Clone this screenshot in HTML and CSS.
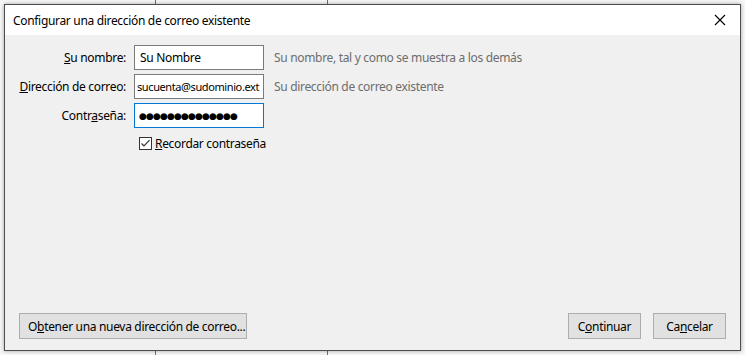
FILE: index.html
```html
<!DOCTYPE html>
<html lang="es">
<head>
<meta charset="utf-8">
<title>Configurar una dirección de correo existente</title>
<link rel="stylesheet" href="styles.css">
</head>
<body>
<div class="window">
  <div class="titlebar">
    <span class="title">Configurar una dirección de correo existente</span>
    <svg class="close" width="12" height="12" viewBox="0 0 12 12"><path d="M1 1 L11 11 M11 1 L1 11" stroke="#000" stroke-width="1.1" fill="none"/></svg>
  </div>
  <div class="content">
    <div class="form">
      <label class="label"><u>S</u>u nombre:</label>
      <div class="input">Su Nombre</div>
      <span class="hint">Su nombre, tal y como se muestra a los demás</span>

      <label class="label"><u>D</u>irección de correo:</label>
      <div class="input small">sucuenta@sudominio.ext</div>
      <span class="hint">Su dirección de correo existente</span>

      <label class="label">Contr<u>a</u>seña:</label>
      <div class="input focus dots">●●●●●●●●●●●●●●</div>
      <span class="hint"></span>

      <span></span>
      <div class="check">
        <svg class="box" width="13" height="13" viewBox="0 0 13 13"><rect x="0.5" y="0.5" width="12" height="12" fill="#fff" stroke="#333"/><path d="M2.5 6.5 L5 9 L10.5 3.2" stroke="#333" stroke-width="1.2" fill="none"/></svg>
        <span><u>R</u>ecordar contraseña</span>
      </div>
    </div>
    <div class="footer">
      <button class="btn wide">O<u>b</u>tener una nueva dirección de correo...</button>
      <div class="right">
        <button class="btn">C<u>o</u>ntinuar</button>
        <button class="btn">Ca<u>n</u>celar</button>
      </div>
    </div>
  </div>
</div>
</body>
</html>
```
FILE: styles.css
```css
html, body {
  margin: 0;
  padding: 0;
}
body {
  width: 745px;
  height: 355px;
  overflow: hidden;
  font-family: "Segoe UI", "Noto Sans", sans-serif;
  font-size: 12px;
  letter-spacing: -0.32px;
  color: #000;
  background:
    linear-gradient(#6e6e6e, #6e6e6e) 155px 0 / 1px 100% no-repeat,
    linear-gradient(#6e6e6e, #6e6e6e) 327px 0 / 1px 100% no-repeat,
    #f7f7f7;
  padding: 4px 0 0 4px;
  box-sizing: border-box;
}
.window {
  width: 737px;
  height: 347px;
  box-sizing: border-box;
  border: 1px solid #4d4d4d;
  background: #f0f0f0;
  display: flex;
  flex-direction: column;
  box-shadow: 0 0 4px rgba(0,0,0,0.35);
}
.titlebar {
  height: 30px;
  background: #fff;
  display: flex;
  align-items: center;
  justify-content: space-between;
  padding: 0 14px 0 8px;
  flex-shrink: 0;
}
.close {
  display: block;
}
.content {
  flex: 1;
  display: flex;
  flex-direction: column;
  justify-content: space-between;
  padding: 10px 14px 11px 0;
}
.form {
  display: grid;
  grid-template-columns: 121px 130px 1fr;
  column-gap: 8px;
  row-gap: 4px;
  align-items: center;
}
.label {
  text-align: right;
  white-space: nowrap;
}
.hint {
  color: #6d6d6d;
  margin-left: 2px;
  white-space: nowrap;
}
.input {
  height: 25px;
  box-sizing: border-box;
  border: 1px solid #7a7a7a;
  background: #fff;
  display: flex;
  align-items: center;
  padding: 0 5px;
  white-space: nowrap;
  overflow: hidden;
}
.input.small {
  font-size: 11px;
  padding: 0 2px;
  letter-spacing: -0.4px;
}
.input.focus {
  border-color: #0078d7;
}
.dots {
  font-family: "DejaVu Sans", sans-serif;
  font-size: 9px;
  letter-spacing: -0.85px;
  padding-left: 4px;
}
.check {
  grid-column: 2 / 4;
  display: flex;
  align-items: center;
  gap: 3px;
  margin-left: 5px;
  margin-top: 3px;
  white-space: nowrap;
}
.box {
  display: block;
}
.footer {
  display: flex;
  justify-content: space-between;
  align-items: flex-end;
  padding-left: 14px;
}
.right {
  display: flex;
  gap: 12px;
}
.btn {
  font: inherit;
  letter-spacing: inherit;
  color: #000;
  height: 26px;
  min-width: 73px;
  background: #e1e1e1;
  border: 1px solid #adadad;
  padding: 0 8px;
  margin: 0;
  white-space: nowrap;
}
.btn.wide {
  width: 228px;
}
```
